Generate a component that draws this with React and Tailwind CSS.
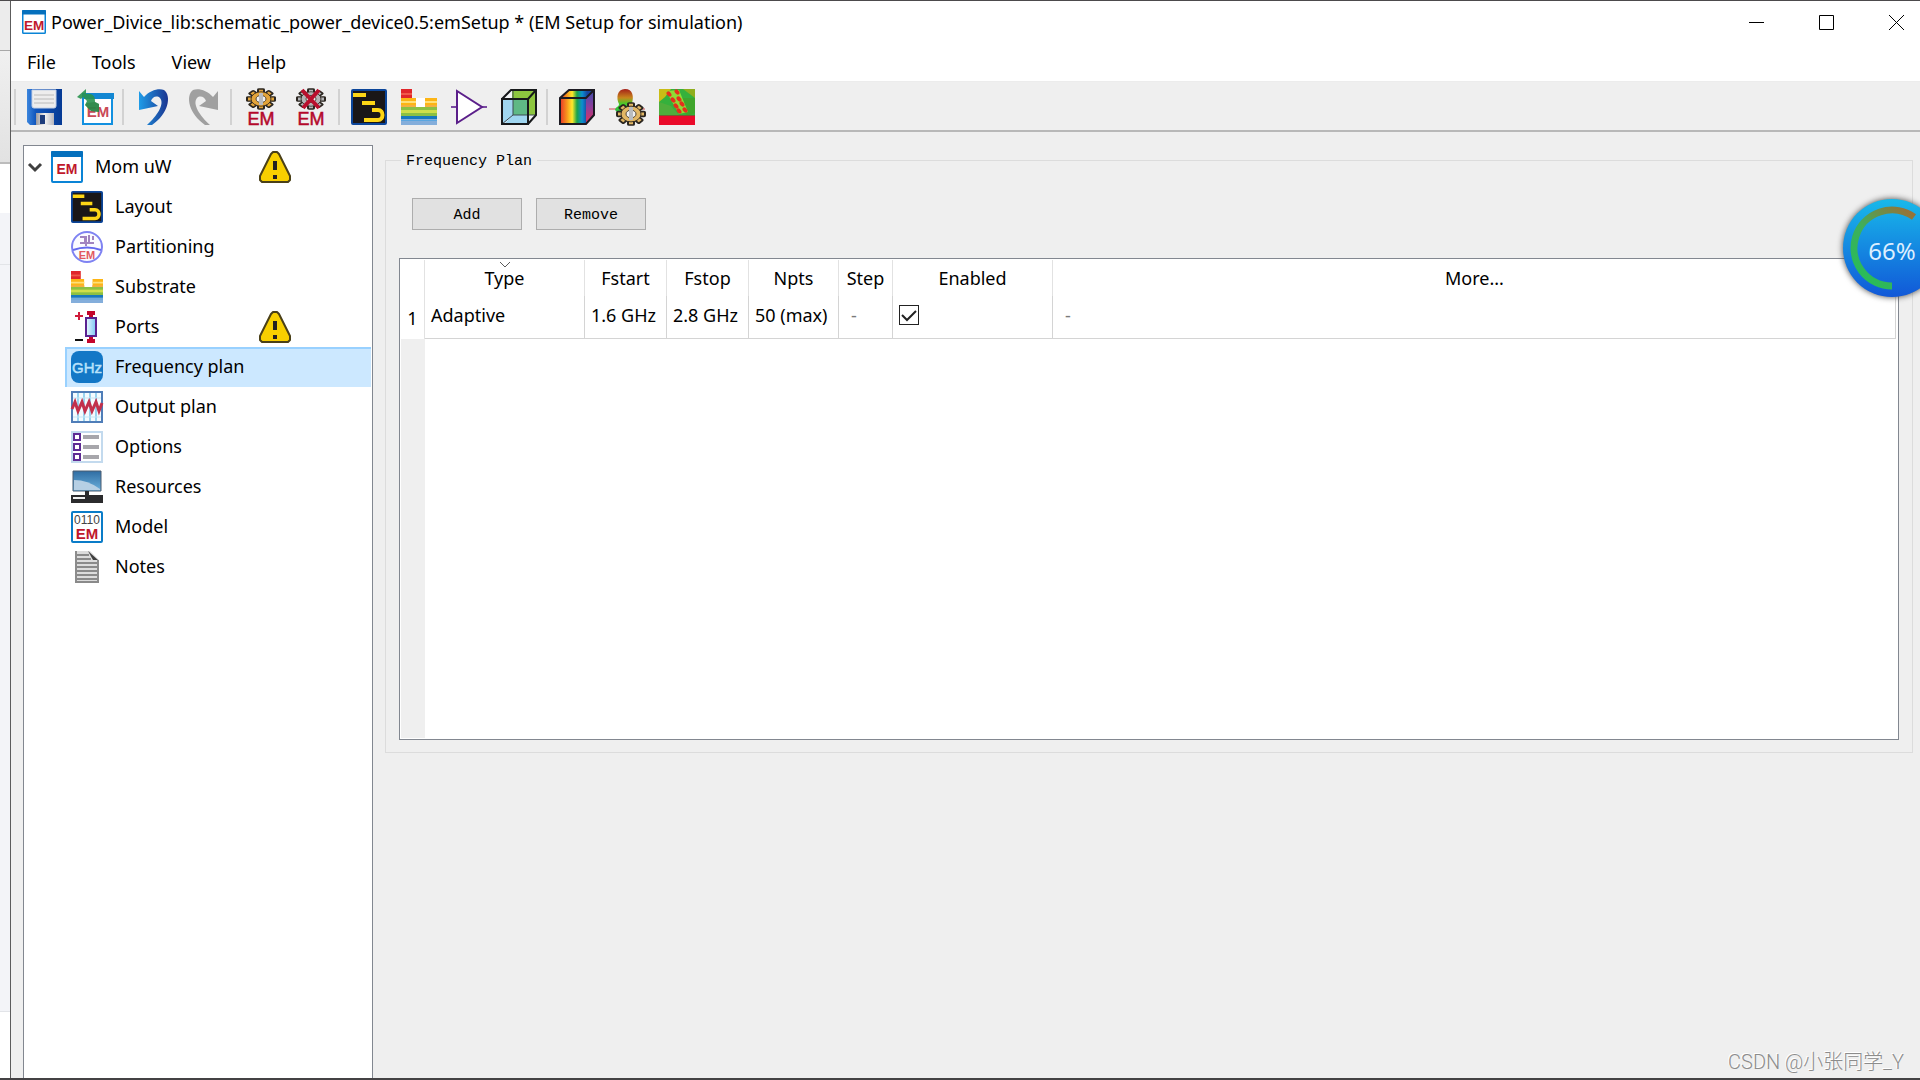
import React, { useState } from "react";

const MENUS = ["File", "Tools", "View", "Help"];

const COLUMNS = [
  { name: "Type", width: "w-[160px]", sorted: true },
  { name: "Fstart", width: "w-[82px]" },
  { name: "Fstop", width: "w-[82px]" },
  { name: "Npts", width: "w-[90px]" },
  { name: "Step", width: "w-[54px]" },
  { name: "Enabled", width: "w-[160px]" },
  { name: "More...", width: "" },
];

function Icon({ children, box = 36, className = "size-9" }) {
  return (
    <svg viewBox={`0 0 ${box} ${box}`} className={`${className} shrink-0 overflow-visible`} aria-hidden="true">
      {children}
    </svg>
  );
}

/* ---------- shared icons ---------- */

function EmIcon({ className, fontSize = 14 }) {
  return (
    <Icon box={32} className={className}>
      <rect x="1" y="1" width="30" height="30" rx="1" fill="#fff" stroke="#0a84d6" strokeWidth="2" />
      <rect x="0" y="0" width="32" height="6" rx="1" fill="#0570bd" />
      <text x="16" y={fontSize > 15 ? 26 : 23} textAnchor="middle" fontFamily="Liberation Sans, sans-serif" fontSize={fontSize} fontWeight="bold" fill="#c0182c">EM</text>
    </Icon>
  );
}

function LayoutIcon({ className }) {
  return (
    <Icon className={className}>
      <rect x="1" y="1" width="34" height="34" rx="1" fill="#1a1718" stroke="#0b4599" strokeWidth="2" />
      <path d="M2 6h13M11 14h13M21 21h6c6 0 6 10 0 10H13" fill="none" stroke="#fdd616" strokeWidth="4" />
    </Icon>
  );
}

function SubstrateIcon({ className }) {
  return (
    <Icon className={className}>
      <path d="M0 0h11v9H0z" fill="#e0262b" />
      <path d="M0 4h11v2H0z" fill="#f0594a" />
      <path d="M0 9h15v9h9V9h12v9H0z" fill="#fdb515" />
      <path d="M15 9h9v9h-9z" fill="#fff" />
      <path d="M0 12h15v2H0zM24 12h12v2H24z" fill="#fee07a" />
      <path d="M0 16h15v2H0zM24 16h12v2H24z" fill="#f4b042" />
      <path d="M0 18h36v9H0z" fill="#8cc044" />
      <path d="M0 21h36v3H0z" fill="#cfdf4a" />
      <path d="M0 27h36v4H0z" fill="#1778be" />
      <path d="M0 30h36v6H0z" fill="#84aedb" />
      <path d="M0 31h36v1H0z" fill="#5aa6e0" />
    </Icon>
  );
}

function WarningIcon() {
  return (
    <Icon box={32} className="size-8">
      <path d="M14 1h4l2 2 11 22v4l-2 2H3l-2-2v-4L12 3z" fill="#f8cf00" stroke="#4a4018" strokeWidth="2" strokeLinejoin="round" />
      <path d="M14 10h4v9h-4zM14 24h4v4h-4z" fill="#231f20" />
    </Icon>
  );
}

function Gear({ cx, cy, rx, ry, fill, hole }) {
  const teeth = [0, 45, 90, 135, 180, 225, 270, 315];
  return (
    <g transform={`translate(${cx} ${cy}) scale(${rx / 14} ${ry / 14})`}>
      {teeth.map((a) => (
        <rect key={a} x="-3" y="-14" width="6" height="8" rx="1" transform={`rotate(${a})`} fill={fill} stroke="#2b2620" strokeWidth="2" />
      ))}
      <circle r="10" fill={fill} stroke="#2b2620" strokeWidth="1" />
      <circle r="9" fill={fill} />
      <circle r="5" fill={hole} stroke="#3a3228" strokeWidth="1" />
    </g>
  );
}

/* ---------- toolbar icons ---------- */

const SaveIcon = () => (
  <Icon>
    <defs>
      <linearGradient id="disk" x1="0" x2="1">
        <stop offset="0" stopColor="#3c86dd" />
        <stop offset=".25" stopColor="#0f55bd" />
        <stop offset="1" stopColor="#063a94" />
      </linearGradient>
      <linearGradient id="shutter" x1="0" x2="1">
        <stop offset="0" stopColor="#9a9aa0" />
        <stop offset=".5" stopColor="#f2f2f2" />
        <stop offset="1" stopColor="#b5b5bd" />
      </linearGradient>
    </defs>
    <path d="M0 0h35v36H3l-3-3z" fill="url(#disk)" />
    <path d="M5 1h24v16q0 2-2 2H7q-2 0-2-2z" fill="#ededed" stroke="#c4d1e6" strokeWidth="1" />
    <path d="M7 6h20M7 10h20M7 14h20" stroke="#bababa" strokeWidth="1" />
    <path d="M9 24h18v12H9z" fill="url(#shutter)" />
    <path d="M13 26h5v9h-5z" fill="#1d3c7c" />
  </Icon>
);

const OpenEmIcon = () => (
  <Icon>
    <path d="M6 6h29v29H6z" fill="#fff" stroke="#1290e0" strokeWidth="2" />
    <path d="M5 4h32v6H5z" fill="#1387d2" />
    <text x="21" y="28" textAnchor="middle" fontFamily="Liberation Sans, sans-serif" fontSize="15" fontWeight="bold" fill="#c94a57">EM</text>
    <path d="M0 8L9 0v5c8-1 9 3 9 8l4 2v8l-8-1-6-6 2-4-4-4-2 2z" fill="#2a934f" opacity=".9" />
    <path d="M10 14l8-1 4 2v8l-8-1-6-6z" fill="#2a7a3e" opacity=".5" />
  </Icon>
);

const UndoIcon = () => (
  <Icon>
    <defs>
      <linearGradient id="undo" x1="0" x2="1">
        <stop offset="0" stopColor="#1f9ce8" />
        <stop offset="1" stopColor="#1b3590" />
      </linearGradient>
    </defs>
    <path d="M4 2l5 6C15 1 24-1 29 1c8 6 4 24-12 35h-5C22 27 30 15 25 9c-3-3-8-1-9 3l7 5-19 4z" fill="url(#undo)" />
  </Icon>
);

const RedoIcon = () => (
  <Icon>
    <path d="M33 2l-5 6C22 1 13-1 8 1c-8 6-4 24 12 35h5C15 27 7 15 12 9c3-3 8-1 9 3l-7 5 19 4z" fill="#a0a0a0" />
  </Icon>
);

const SimulateIcon = () => (
  <Icon>
    <Gear cx={18} cy={10} rx={14} ry={10} fill="#e3a43a" hole="#efefef" />
    <path d="M16 4h4v12h-4z" fill="#b9bcc0" />
    <text x="18" y="36" textAnchor="middle" fontFamily="Liberation Sans, sans-serif" fontSize="18" fill="#b4082c" stroke="#b4082c" strokeWidth=".5">EM</text>
  </Icon>
);

const StopIcon = () => (
  <Icon>
    <Gear cx={18} cy={10} rx={14} ry={10} fill="#b4b4b6" hole="#efefef" />
    <path d="M9 1l17 18M26 1L10 19" stroke="#b90f2d" strokeWidth="4" />
    <text x="18" y="36" textAnchor="middle" fontFamily="Liberation Sans, sans-serif" fontSize="18" fill="#b4082c" stroke="#b4082c" strokeWidth=".5">EM</text>
  </Icon>
);

const SymbolIcon = () => (
  <Icon>
    <path d="M0 18h6M31 18h5" stroke="#7a4aa0" strokeWidth="2" />
    <path d="M6 2v32l25-16z" fill="#fff" stroke="#5b1f8a" strokeWidth="2" />
  </Icon>
);

const CubeIcon = () => (
  <Icon>
    <path d="M10 1h25v25l-9 9H1V10z" fill="#f4f6f8" />
    <path d="M11 1h24v25h-9V10H11z" fill="#8dc63f" />
    <path d="M1 10h11v16L2 35H1zM3 35l9-9h14v9z" fill="#a0d6f0" />
    <path d="M12 10h14v16H12z" fill="#5fb985" />
    <path d="M12 1v25M12 26h23M12 26l-11 9" stroke="#3f4a52" strokeWidth="1" fill="none" />
    <path d="M1 10h26v25H1zM1 10l9-9h25v25l-8 9M27 10l8-9" fill="none" stroke="#17191b" strokeWidth="2" />
  </Icon>
);

const RainbowCubeIcon = () => (
  <Icon>
    <defs>
      <linearGradient id="rainbow" x1="0" x2="1">
        <stop offset="0" stopColor="#e8332a" />
        <stop offset=".2" stopColor="#f7941d" />
        <stop offset=".36" stopColor="#ffe92a" />
        <stop offset=".5" stopColor="#19a34a" />
        <stop offset=".65" stopColor="#0b8fd0" />
        <stop offset=".8" stopColor="#1745a0" />
      </linearGradient>
      <linearGradient id="cubeSide" x1="0" y1="0" x2="0" y2="1">
        <stop offset="0" stopColor="#3b4fae" />
        <stop offset=".5" stopColor="#8e3f9c" />
        <stop offset="1" stopColor="#e0305a" />
      </linearGradient>
    </defs>
    <path d="M1 9l9-8h25l-8 8v26H1z" fill="url(#rainbow)" />
    <path d="M27 9l8-8v25l-8 9z" fill="url(#cubeSide)" />
    <path d="M1 9l9-8h25v25l-8 9H1zM1 9h26l8-8" fill="none" stroke="#1c1a22" strokeWidth="2" />
  </Icon>
);

const FarFieldIcon = () => (
  <Icon>
    <defs>
      <linearGradient id="lobe" x1="0" y1="0" x2="0" y2="1">
        <stop offset="0" stopColor="#a52019" />
        <stop offset=".35" stopColor="#c7861c" />
        <stop offset=".6" stopColor="#3fd02a" />
        <stop offset="1" stopColor="#22b84e" />
      </linearGradient>
    </defs>
    <path d="M0 20h36" stroke="#d04a50" strokeWidth="1" />
    <path d="M16 0c8 0 9 8 7 14l2 8c-3 4-14 5-19-1 1-4 4-3 4-6C7 9 8 0 16 0z" fill="url(#lobe)" />
    <Gear cx={22} cy={25} rx={14} ry={11} fill="#e2b765" hole="#efefef" />
    <path d="M20 18h4v13h-4z" fill="#b9bcc0" />
  </Icon>
);

const FieldMapIcon = () => (
  <Icon>
    <path d="M0 0h36v27H0z" fill="#35b13c" />
    <path d="M0 0h12L6 8l-6 5z" fill="#c9bd16" />
    <path d="M24 0h12v9L28 3z" fill="#8fae1e" />
    <path d="M0 13l12 4 8 9H0z" fill="#4fae3c" />
    <path d="M36 9v15l-8 3-8-18z" fill="#3fa52c" />
    <path d="M7 2l13-1 9 22-9 2z" fill="#8fdc35" />
    {[[10, 5], [18, 3], [14, 11], [20, 10], [17, 17], [23, 15], [20, 22], [26, 21]].map(([x, y]) => (
      <ellipse key={`${x}-${y}`} cx={x} cy={y} rx="3" ry="2" transform={`rotate(50 ${x} ${y})`} fill="#e5301c" />
    ))}
    <path d="M0 26h36v1H0z" fill="#7a5a30" />
    <path d="M0 27h36v9H0z" fill="#ea0a2a" />
  </Icon>
);

/* ---------- tree icons ---------- */

const PartitioningIcon = () => (
  <Icon box={32} className="size-8">
    <circle cx="16" cy="16" r="15" fill="#fbfbff" stroke="#7f83f2" strokeWidth="2" />
    <path d="M2 19q14-5 28 0" fill="none" stroke="#6468ee" strokeWidth="2" />
    <path d="M9 6h5v6M18 4v8h5M22 5v4M9 12h13M15 5v10" fill="none" stroke="#a184c0" strokeWidth="2" />
    <text x="16" y="28" textAnchor="middle" fontFamily="Liberation Sans, sans-serif" fontSize="11" fontWeight="bold" fill="#e2595f">EM</text>
  </Icon>
);

const PortsIcon = () => (
  <Icon box={32} className="size-8">
    <defs>
      <linearGradient id="port" x1="0" x2="1">
        <stop offset="0" stopColor="#eaf8ff" />
        <stop offset="1" stopColor="#7cc8f2" />
      </linearGradient>
    </defs>
    <path d="M4 5h8M8 1v8" stroke="#d01c3c" strokeWidth="2" />
    <path d="M4 29h8" stroke="#111" strokeWidth="2" />
    <path d="M16 0h8v4h-2v3h-4V4h-2zM18 26h4v2h2v4h-8v-4h2z" fill="#c4062c" />
    <rect x="15" y="7" width="10" height="18" fill="url(#port)" stroke="#5a2290" strokeWidth="2" />
  </Icon>
);

const GhzIcon = () => (
  <Icon box={32} className="size-8">
    <rect width="32" height="32" rx="8" fill="#1377c6" />
    <text x="16" y="22" textAnchor="middle" fontFamily="Liberation Sans, sans-serif" fontSize="15" fill="#b9e2fb" stroke="#b9e2fb" strokeWidth=".5">GHz</text>
  </Icon>
);

const OutputIcon = () => (
  <Icon box={32} className="size-8">
    <rect x="1" y="1" width="30" height="30" fill="#f4fbff" stroke="#4f7db8" strokeWidth="2" />
    <path d="M7 2v28M13 2v28M19 2v28M25 2v28" stroke="#9bd4f0" strokeWidth="2" />
    <path d="M2 7h28M2 26h28" stroke="#c6e6f5" strokeWidth="1" />
    <path d="M1 18l3-7 3 9 4-9 3 9 4-9 3 9 4-9 3 9 3-8" fill="none" stroke="#c2304c" strokeWidth="3" />
  </Icon>
);

const OptionsIcon = () => (
  <Icon box={32} className="size-8">
    <rect x="1" y="1" width="30" height="30" fill="#fff" stroke="#c3daee" strokeWidth="2" />
    <path d="M3 3h6v6H3zM3 13h6v6H3zM3 23h6v6H3z" fill="#fff" stroke="#5e2b94" strokeWidth="2" />
    <path d="M12 6h16M12 16h16M12 26h16" stroke="#a7a6ab" strokeWidth="4" />
  </Icon>
);

const ResourcesIcon = () => (
  <Icon box={32} className="size-8">
    <defs>
      <linearGradient id="screen" x1="0" y1="0" x2="0" y2="1">
        <stop offset="0" stopColor="#2f6da3" />
        <stop offset="1" stopColor="#6cb0dc" />
      </linearGradient>
    </defs>
    <rect x="2" y="0" width="28" height="20" fill="url(#screen)" />
    <path d="M3 9q14 0 26 9v1H3z" fill="#b6cfe4" />
    <path d="M2 0h28v20H2z" fill="none" stroke="#4a5d70" strokeWidth="1" />
    <path d="M14 20h4v4h14v8H0v-8h14z" fill="#2b2b2d" />
    <path d="M2 26h12v2H2z" fill="#f2f2f2" />
  </Icon>
);

const ModelIcon = () => (
  <Icon box={32} className="size-8">
    <rect x="1" y="1" width="30" height="30" rx="1" fill="#fff" stroke="#0a7cc8" strokeWidth="2" />
    <text x="16" y="13" textAnchor="middle" fontFamily="Liberation Sans, sans-serif" fontSize="12" fill="#444">0110</text>
    <text x="16" y="28" textAnchor="middle" fontFamily="Liberation Sans, sans-serif" fontSize="15" fontWeight="bold" fill="#c0182c">EM</text>
  </Icon>
);

const NotesIcon = () => (
  <Icon box={32} className="size-8">
    <path d="M4 0h15l9 9v23H4z" fill="#dcdcdc" />
    <path d="M5 0v32M27 9v23" stroke="#8c8c8c" strokeWidth="2" />
    <path d="M6 4h12M6 8h14M6 12h20M6 16h20M6 20h20M6 24h20M6 28h20M4 31h24" stroke="#8a8a8a" strokeWidth="2" />
    <path d="M17 0l10 9h-5z" fill="#3f3f3f" />
  </Icon>
);

const TOOL_GROUPS = [
  [["Save", SaveIcon], ["Open EM setup", OpenEmIcon]],
  [["Undo", UndoIcon], ["Redo", RedoIcon]],
  [["Simulate", SimulateIcon], ["Stop simulation", StopIcon]],
  [["Layout", LayoutIcon], ["Substrate", SubstrateIcon], ["Symbol", SymbolIcon], ["3D view", CubeIcon]],
  [["Field visualization", RainbowCubeIcon], ["Far field", FarFieldIcon], ["Field map", FieldMapIcon]],
];

const TREE = [
  { name: "Layout", icon: <LayoutIcon className="size-8" /> },
  { name: "Partitioning", icon: <PartitioningIcon /> },
  { name: "Substrate", icon: <SubstrateIcon className="size-8" /> },
  { name: "Ports", icon: <PortsIcon />, warning: true },
  { name: "Frequency plan", icon: <GhzIcon /> },
  { name: "Output plan", icon: <OutputIcon /> },
  { name: "Options", icon: <OptionsIcon /> },
  { name: "Resources", icon: <ResourcesIcon /> },
  { name: "Model", icon: <ModelIcon /> },
  { name: "Notes", icon: <NotesIcon /> },
];

function TitleBar() {
  return (
    <header className="flex h-[42px] items-center bg-white pl-[11px]">
      <EmIcon className="size-6" fontSize={18} />
      <h1 className="ml-[5px] flex-1 whitespace-nowrap">
        Power_Divice_lib:schematic_power_device0.5:emSetup * (EM Setup for simulation)
      </h1>
      <div className="flex h-full gap-[55px] pr-4">
        <button aria-label="Minimize">
          <Icon box={15} className="size-[15px]"><path d="M0 7.5h15" stroke="#000" /></Icon>
        </button>
        <button aria-label="Maximize">
          <Icon box={15} className="size-[15px]"><path d="M.5.5h14v14H.5z" fill="none" stroke="#000" /></Icon>
        </button>
        <button aria-label="Close">
          <Icon box={15} className="size-[15px]"><path d="M0 0l15 15M15 0L0 15" stroke="#000" /></Icon>
        </button>
      </div>
    </header>
  );
}

function Toolbar() {
  return (
    <div role="toolbar" className="flex h-[50px] items-center border-b-2 border-[#b8b8b8] bg-[#efefef] pt-[2px] pl-px">
      {TOOL_GROUPS.map((group, i) => (
        <div key={i} className="flex items-center">
          <span className="mr-1 ml-[2px] h-9 w-[2px] bg-[#d2d2d2]" />
          {group.map(([label, Glyph]) => (
            <button key={label} aria-label={label} className="grid h-[42px] w-[50px] place-items-center">
              <Glyph />
            </button>
          ))}
        </div>
      ))}
    </div>
  );
}

function Sidebar({ selected, onSelect }) {
  return (
    <nav className="w-[350px] shrink-0 border border-b-0 border-[#828790] bg-white pt-px pr-px">
      <button className="flex h-10 w-full items-center pl-[3px] text-left">
        <Icon box={16} className="size-4">
          <path d="M2 5l6 6 6-6" fill="none" stroke="#404040" strokeWidth="3" />
        </Icon>
        <span className="ml-2"><EmIcon className="size-8" /></span>
        <span className="ml-3 w-[164px] pb-[2px]">Mom uW</span>
        <WarningIcon />
      </button>
      <ul className="pl-[41px]">
        {TREE.map((item) => (
          <li key={item.name}>
            <button
              onClick={() => onSelect(item.name)}
              className={`flex h-10 w-full items-center border-t-2 border-l-2 pb-[2px] pl-1 text-left ${selected === item.name ? "border-[#99d1ff] bg-[#cce8ff]" : "border-transparent"}`}
            >
              {item.icon}
              <span className="ml-3 w-[144px] pb-[2px]">{item.name}</span>
              {item.warning && <WarningIcon />}
            </button>
          </li>
        ))}
      </ul>
    </nav>
  );
}

function PlanTable() {
  const [enabled, setEnabled] = useState(true);
  const cell = "border-r border-b border-[#d4d4d4] px-[6px] pb-1 whitespace-nowrap";
  const emptyCell = "border-r border-b border-[#d4d4d4] px-3 pb-1 text-[#7a7a7a]";
  return (
    <div className="flex min-h-[482px] flex-col border border-[#828790] bg-white p-px pr-[2px]">
      <table className="w-full table-fixed border-separate border-spacing-0">
        <thead>
          <tr className="h-9">
            <th aria-label="Row" className="w-6 border-r border-[#e2e2e2]" />
            {COLUMNS.map((c) => (
              <th key={c.name} scope="col" className={`${c.width} relative border-r border-[#e2e2e2] p-0 font-normal last:border-r-0`}>
                {c.sorted && (
                  <svg viewBox="0 0 12 6" className="absolute top-[2px] left-1/2 h-[6px] w-3 -translate-x-1/2" aria-hidden="true">
                    <path d="M1 0l5 5 5-5" fill="none" stroke="#5a5a5a" />
                  </svg>
                )}
                {c.name}
              </th>
            ))}
          </tr>
        </thead>
        <tbody>
          <tr className="h-[43px]">
            <th scope="row" className="border-r border-[#e2e2e2] p-0 font-normal">1</th>
            <td className={cell}>Adaptive</td>
            <td className={cell}>1.6 GHz</td>
            <td className={cell}>2.8 GHz</td>
            <td className={cell}>50 (max)</td>
            <td className={emptyCell}>-</td>
            <td className={cell}>
              <label className="grid size-5 place-items-center">
                <input
                  type="checkbox"
                  aria-label="Enabled"
                  checked={enabled}
                  onChange={(e) => setEnabled(e.target.checked)}
                  className="col-start-1 row-start-1 size-5 appearance-none border border-[#222] bg-white"
                />
                {enabled && (
                  <svg viewBox="0 0 20 20" className="pointer-events-none col-start-1 row-start-1 size-5" aria-hidden="true">
                    <path d="M3 10l5 5 9-9" fill="none" stroke="#222" strokeWidth="2" />
                  </svg>
                )}
              </label>
            </td>
            <td className={emptyCell}>-</td>
          </tr>
        </tbody>
      </table>
      <div className="w-6 flex-1 bg-[#efefef]" />
    </div>
  );
}

function ChargeBubble() {
  return (
    <div className="absolute top-[197px] -right-[22px] grid size-[100px] place-items-center">
      <svg viewBox="0 0 100 100" className="col-start-1 row-start-1 size-[100px] overflow-visible drop-shadow-[0_0_3px_#444]" aria-hidden="true">
        <defs>
          <linearGradient id="bubble" x1="0" y1="0" x2="0" y2="1">
            <stop offset="0" stopColor="#18b9ea" />
            <stop offset="1" stopColor="#1158d8" />
          </linearGradient>
          <linearGradient id="arc" x1=".2" y1="1" x2=".9" y2="0">
            <stop offset="0" stopColor="#27bd58" />
            <stop offset=".5" stopColor="#3fae5c" />
            <stop offset="1" stopColor="#967238" />
          </linearGradient>
        </defs>
        <circle cx="50" cy="50" r="49" fill="url(#bubble)" />
        <path d="M50 88A38 38 0 1 1 72 19" fill="none" stroke="url(#arc)" strokeWidth="7" />
      </svg>
      <span className="z-10 col-start-1 row-start-1 pt-[6px] text-2xl text-[#dceeff]">66%</span>
    </div>
  );
}

export default function App() {
  const [selected, setSelected] = useState("Frequency plan");
  return (
    <div className="relative flex h-screen overflow-hidden border-t border-b-2 border-t-[#4c4a4c] border-b-[#444244] bg-[#efefef] font-['Noto_Sans','Noto_Sans_CJK_SC',sans-serif] text-lg text-black">
      {/* Edge of the window behind */}
      <div className="flex w-[10px] shrink-0 flex-col bg-[#f3f4f8]">
        <div className="h-[50px] border-b border-[#a8a8a8] bg-[#ececec]" />
        <div className="h-[113px] border-b-2 border-[#bcbcbc] bg-linear-to-b from-[#f0f0f0] to-[#e2e2e2]" />
        <div className="h-[49px] bg-white" />
        <div className="h-[52px] border-b border-[#e2e4e8]" />
        <div className="flex-1 border-b border-[#e2e4e8]" />
        <div className="h-[66px] bg-white" />
      </div>

      <div className="flex min-w-0 flex-1 flex-col border-l border-[#5c5c5c]">
        <TitleBar />
        <div className="flex h-[39px] items-center gap-1 border-b border-[#ececec] bg-white">
          {MENUS.map((m) => (
            <button key={m} className="px-4">{m}</button>
          ))}
        </div>
        <Toolbar />

        <div className="flex min-h-0 flex-1 gap-3 pt-[13px] pr-[7px] pl-3">
          <Sidebar selected={selected} onSelect={setSelected} />
          <main className="min-w-0 flex-1">
            <fieldset className="min-w-0 border border-[#dcdcdc] px-[13px] pb-3 font-['Liberation_Mono',monospace] text-[15px]">
              <legend className="ml-[2px] h-[30px] px-[5px] pt-1 leading-[26px]">Frequency Plan</legend>
              <div className="mb-7 flex gap-[14px] pt-[23px] pl-[13px]">
                <button className="h-8 w-[110px] border border-[#adadad] bg-[#e1e1e1] pt-1">Add</button>
                <button className="h-8 w-[110px] border border-[#adadad] bg-[#e1e1e1] pt-1">Remove</button>
              </div>
              <div className="font-['Noto_Sans','Noto_Sans_CJK_SC',sans-serif] text-lg">
                <PlanTable />
              </div>
            </fieldset>
          </main>
        </div>
      </div>

      <ChargeBubble />
      <p className="absolute right-4 bottom-[2px] font-['Roboto','Noto_Sans_CJK_SC',sans-serif] text-xl font-light text-[#8c8c8c] [text-shadow:-1px_-1px_0_#fff]">
        CSDN @小张同学_Y
      </p>
    </div>
  );
}
